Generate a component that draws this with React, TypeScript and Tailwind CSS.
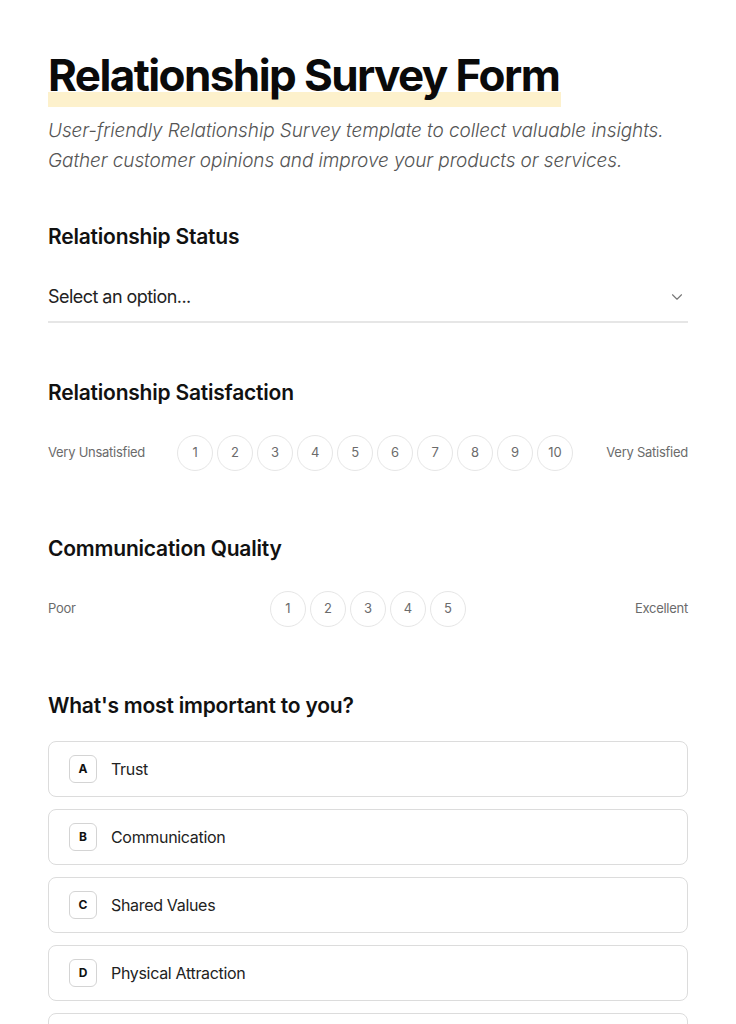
import React from "react";
import { ChevronDown } from "lucide-react";

const font = { fontFamily: "Inter, 'Noto Sans', sans-serif" };

function Scale({ left, right, count }: { left: string; right: string; count: number }) {
  return (
    <div className="flex items-center gap-8">
      <div className="flex-1 whitespace-nowrap text-[13px] text-[#6b6b6b] tracking-[-0.02em]">{left}</div>
      <div className="flex gap-1">
        {Array.from({ length: count }, (_, i) => (
          <div
            key={i}
            className="w-9 h-9 rounded-full border border-[#e6e6e6] flex items-center justify-center text-[13px] text-[#6b6b6b]"
          >
            {i + 1}
          </div>
        ))}
      </div>
      <div className="flex-1 whitespace-nowrap text-right text-[13px] text-[#6b6b6b] tracking-[-0.02em]">{right}</div>
    </div>
  );
}

function Heading({ children }: { children: React.ReactNode }) {
  return (
    <h2 className="text-[21px] leading-[28px] font-semibold text-[#111] tracking-[-0.01em]">{children}</h2>
  );
}

export default function App() {
  const options = [
    ["A", "Trust"],
    ["B", "Communication"],
    ["C", "Shared Values"],
    ["D", "Physical Attraction"],
    ["E", "Financial Stability"],
  ];
  return (
    <div className="min-h-screen bg-white px-12 pt-[49px] pb-12" style={font}>
      <h1 className="leading-[53px] h-[53px]">
        <span className="inline-block leading-[53px] h-[58px] align-top text-[44px] font-bold text-[#0a0a0a] tracking-[-0.036em] bg-[linear-gradient(transparent_75%,#fdf1cc_75%)] pr-0.5">
          Relationship Survey Form
        </span>
      </h1>
      <p className="mt-[14px] text-[19px] leading-[30px] italic font-light text-[#555] tracking-[-0.005em]">
        User-friendly Relationship Survey template to collect valuable insights.
        <br />
        Gather customer opinions and improve your products or services.
      </p>

      <section className="mt-[47px]">
        <Heading>Relationship Status</Heading>
        <div className="mt-8 flex items-center justify-between border-b-2 border-[#e6e6e6] pb-[10px]">
          <span className="text-[18px] leading-[28px] text-[#222] tracking-[-0.03em]">Select an option...</span>
          <ChevronDown size={18} strokeWidth={1.5} className="text-[#777] mr-0.5" />
        </div>
      </section>

      <section className="mt-[56px]">
        <Heading>Relationship Satisfaction</Heading>
        <div className="mt-7">
          <Scale left="Very Unsatisfied" right="Very Satisfied" count={10} />
        </div>
      </section>

      <section className="mt-16">
        <Heading>Communication Quality</Heading>
        <div className="mt-7">
          <Scale left="Poor" right="Excellent" count={5} />
        </div>
      </section>

      <section className="mt-[65px]">
        <Heading>What's most important to you?</Heading>
        <div className="mt-[21px] flex flex-col gap-3">
          {options.map(([k, label]) => (
            <div key={k} className="h-[56px] border border-[#dcdcdc] rounded-lg flex items-center px-5 gap-[14px]">
              <div className="w-7 h-7 rounded-md border border-[#d4d4d4] flex items-center justify-center text-[12px] font-bold text-[#111]">
                {k}
              </div>
              <span className="text-[16px] text-[#222] tracking-[-0.02em]">{label}</span>
            </div>
          ))}
        </div>
      </section>
    </div>
  );
}
